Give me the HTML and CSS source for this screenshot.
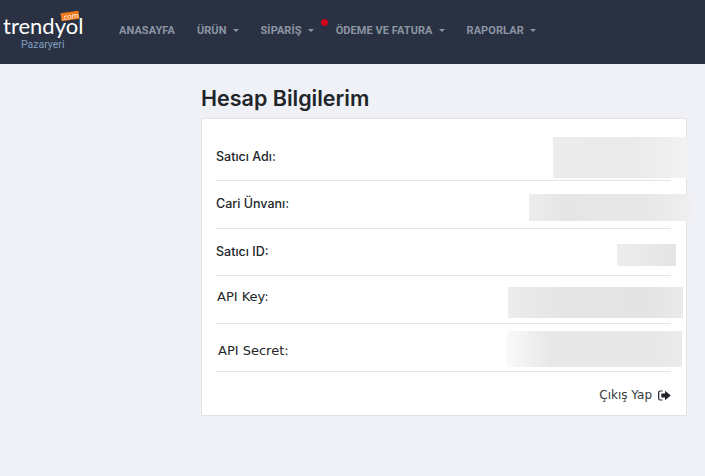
FILE: index.html
```html
<!DOCTYPE html>
<html lang="tr">
<head>
<meta charset="utf-8">
<title>Hesap Bilgilerim</title>
<link rel="stylesheet" href="styles.css">
</head>
<body>
<header class="topbar">
  <a class="logo">
    <span class="logo-name">trendyol</span>
    <span class="logo-com">.com</span>
    <span class="logo-sub">Pazaryeri</span>
  </a>
  <nav class="nav">
    <a class="nav-item">ANASAYFA</a>
    <a class="nav-item caret">ÜRÜN</a>
    <a class="nav-item caret has-dot">SİPARİŞ<i class="dot"></i></a>
    <a class="nav-item caret">ÖDEME VE FATURA</a>
    <a class="nav-item caret">RAPORLAR</a>
  </nav>
</header>
<main class="main">
  <h1 class="title">Hesap Bilgilerim</h1>
  <section class="card">
    <div class="row row-1"><span class="label">Satıcı Adı:</span><i class="blur blur-1"></i></div>
    <div class="row row-2"><span class="label">Cari Ünvanı:</span><i class="blur blur-2"></i></div>
    <div class="row row-3"><span class="label">Satıcı ID:</span><i class="blur blur-3"></i></div>
    <div class="row row-4"><span class="label plain">API Key:</span><i class="blur blur-4"></i></div>
    <div class="row row-5"><span class="label plain shift">API Secret:</span><i class="blur blur-5"></i></div>
    <div class="logout">
      <span>Çıkış Yap</span>
      <svg class="logout-icon" width="13" height="11" viewBox="0 0 13 11" aria-hidden="true">
        <path d="M4.500 1H2.200C1.200 1 .7 1.500 .7 2.200v6.600C.7 9.500 1.200 10 2.200 10H4.500" fill="none" stroke="#212529" stroke-width="1.200"/>
        <path d="M3.300 3.500H7V.8L12.800 5.500 7 10.200V7.500H3.300Z" fill="#212529"/>
      </svg>
    </div>
  </section>
</main>
</body>
</html>
```
FILE: styles.css
```css
* { box-sizing: border-box; }
html, body { margin: 0; padding: 0; }
body {
  width: 705px;
  height: 476px;
  overflow: hidden;
  background: #f0f1f7;
  color: #212529;
  font-family: Inter, Roboto, sans-serif;
}
.topbar {
  height: 64px;
  background: #293142;
  display: flex;
  align-items: flex-start;
}
.logo {
  position: relative;
  width: 119px;
  height: 64px;
  display: block;
}
.logo-name {
  position: absolute;
  left: 3px;
  top: 15px;
  color: #fff;
  font: 400 22px/22px Lato, sans-serif;
}
.logo-com {
  position: absolute;
  left: 61px;
  top: 12px;
  width: 18px;
  height: 8px;
  background: #f27a1a;
  color: #fff;
  font: 400 7.500px/8px "Open Sans", sans-serif;
  text-align: center;
  transform: rotate(-8deg);
}
.logo-sub {
  position: absolute;
  left: 21px;
  top: 38px;
  color: #7fa0c0;
  font: 400 10.500px/13px Roboto, sans-serif;
}
.nav {
  display: flex;
  padding-top: 24px;
  font: 700 11px/14px Roboto, sans-serif;
  color: #8b95a3;
}
.nav-item {
  position: relative;
  margin-right: 22px;
  white-space: nowrap;
  letter-spacing: 0.07px;
}
.nav-item.caret::after {
  content: "";
  display: inline-block;
  margin-left: 6px;
  vertical-align: 2px;
  border-top: 3.500px solid #8b95a3;
  border-left: 3.500px solid transparent;
  border-right: 3.500px solid transparent;
}
.dot {
  position: absolute;
  right: -14px;
  top: -5px;
  width: 7px;
  height: 7px;
  border-radius: 50%;
  background: #d0021b;
}
.main {
  padding: 21px 18px 0 201px;
}
.title {
  margin: 0 0 6px;
  font: 600 21.500px/27px Inter, Roboto, sans-serif;
  color: #212529;
}
.card {
  position: relative;
  width: 486px;
  height: 298px;
  background: #fff;
  border: 1px solid #e3e3e3;
  padding: 0 15px 0 14px;
}
.row {
  border-bottom: 1px solid #e3e3e3;
  display: flex;
  align-items: flex-start;
}
.row-1 { height: 62px; padding-top: 30px; }
.row-2 { height: 48px; padding-top: 15px; }
.row-3 { height: 47px; padding-top: 15px; }
.row-4 { height: 48px; padding-top: 13px; }
.row-5 { height: 48px; padding-top: 19px; }
.label {
  font: 500 12.500px/16px Inter, Roboto, sans-serif;
  color: #212529;
}
.label.plain {
  font: 400 13px/16px "DejaVu Sans", sans-serif;
  padding-left: 1px;
}
.label.shift { padding-left: 2px; }
.blur {
  position: absolute;
  display: block;
}
.blur-1 {
  left: 351px; top: 18px; width: 134px; height: 41px;
  background: linear-gradient(90deg, #ececec, #e9eae9 55%, #eeeeee 80%, #f3f3f4);
}
.blur-2 {
  left: 327px; top: 75px; width: 165px; height: 27px;
  background: linear-gradient(90deg, #ededed, #e6e6e6 20%, #e7e7e7 70%, #f0f0f2);
}
.blur-3 {
  left: 415px; top: 125px; width: 59px; height: 22px;
  background: linear-gradient(90deg, #ededed, #e4e4e4);
}
.blur-4 {
  left: 306px; top: 168px; width: 175px; height: 31px;
  background: linear-gradient(90deg, #ececec, #e4e5e4 30%, #e4e4e4 80%, #eaeaea);
}
.blur-5 {
  left: 305px; top: 212px; width: 175px; height: 36px;
  background: linear-gradient(90deg, #f9f9f9, #e8e8e8 25%, #e7e7e7 80%, #ebebeb);
}
.logout {
  display: flex;
  justify-content: flex-end;
  align-items: center;
  gap: 6px;
  padding-top: 15px;
  font: 400 12px/16px "DejaVu Sans", sans-serif;
  color: #343a40;
}
.logout-icon { display: block; }
```
